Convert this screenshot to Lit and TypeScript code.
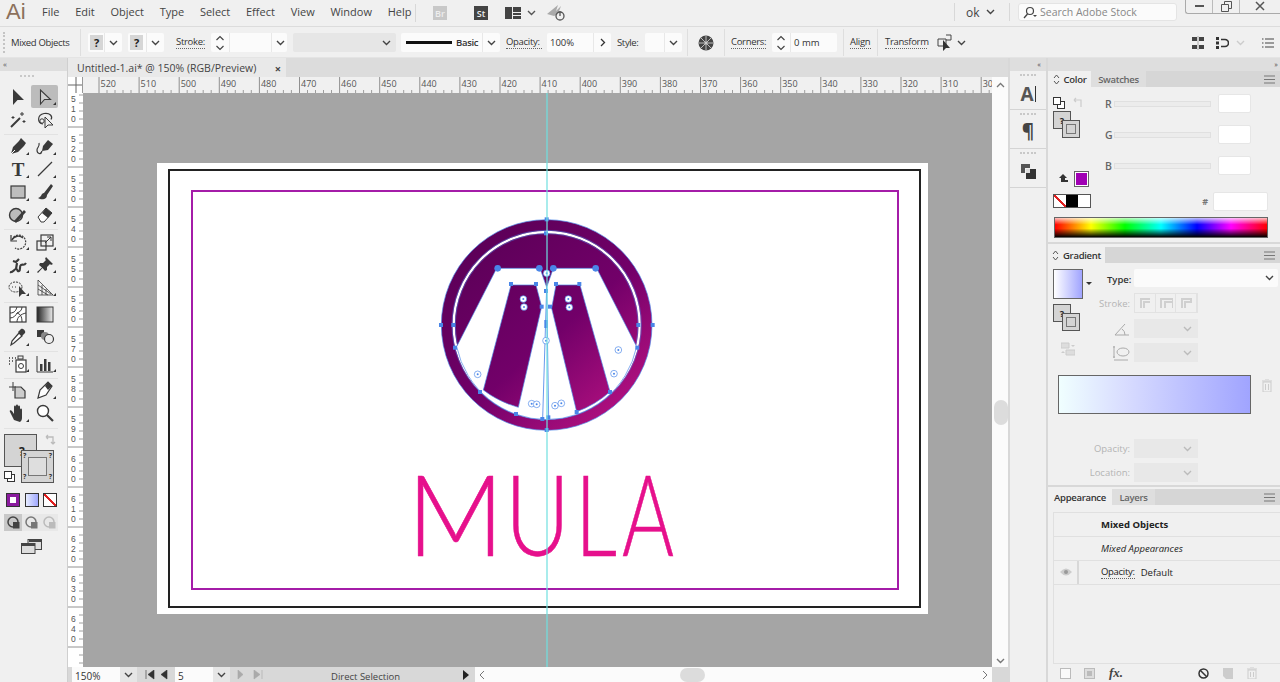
import { LitElement, html, css, svg } from 'lit';
import { customElement } from 'lit/decorators.js';

const chevron = html`<svg class="chev" width="9" height="6" viewBox="0 0 9 6"><path d="M1 1l3.5 3.5L8 1" fill="none" stroke="currentColor" stroke-width="1.4"/></svg>`;
const spinner = html`<svg width="10" height="16" viewBox="0 0 10 16"><path d="M1.5 5L5 1.5 8.5 5M1.5 11L5 14.5 8.5 11" fill="none" stroke="#444" stroke-width="1.2"/></svg>`;
const burger = html`<svg width="11" height="9" viewBox="0 0 11 9"><path d="M0 1h11M0 4.5h11M0 8h11" stroke="#777" stroke-width="1.2"/></svg>`;
const updown = html`<svg width="7" height="11" viewBox="0 0 7 11"><path d="M1 4l2.5-3L6 4M1 7l2.5 3L6 7" fill="none" stroke="#555"/></svg>`;

const ink = '#3a3a3a';
// tool icons, 20x20, in the order of the palette; null marks a separator
const tools: any[] = [
  svg`<path d="M5 2v16l4.5-5H16z" fill="${ink}"/>`,
  svg`<path d="M5.5 3v14l4-4.5h6z" fill="#cfcfcf" stroke="${ink}" stroke-width="1.1"/>`,
  svg`<path d="M3 17l9-9" stroke="${ink}" stroke-width="2"/><path d="M14 2v4M12 4h4M5 6v3M3.500 7.500h3M16 10v3M14.500 11.500h3" stroke="${ink}"/>`,
  svg`<path d="M8 14C2 13 2 5 9 3.500c6-1 9 3 7 6" fill="none" stroke="${ink}" stroke-width="1.2"/><circle cx="7" cy="11" r="2.200" fill="none" stroke="${ink}"/><path d="M10 7v11l3-3h5z" fill="#eee" stroke="${ink}"/>`,
  null,
  svg`<path d="M3 18l2-7 6-6 5 5-6 6zM11 5l2-3 5 5-2 3" fill="${ink}"/><path d="M3 18l4-4" stroke="#fff"/>`,
  svg`<path d="M7 15l1-5 5-6 5 4-5 6z" fill="${ink}"/><path d="M7 15C6 19 2 18 2 14c0-3 3-3 2-7" fill="none" stroke="${ink}" stroke-width="1.2"/>`,
  svg`<text x="10" y="17" text-anchor="middle" class="glyph">T</text>`,
  svg`<path d="M3 17L17 3" stroke="${ink}" stroke-width="1.3"/>`,
  svg`<rect x="3" y="4" width="14" height="12" fill="#bdbdbd" stroke="${ink}" stroke-width="1.2"/>`,
  svg`<path d="M9 11l7-9 2 2-6 9zM9 11c-3 0-2 4-6 5 3 2 9 2 9-3z" fill="${ink}"/>`,
  svg`<circle cx="8" cy="10" r="6.500" fill="#bbb" stroke="${ink}" stroke-width="1.4"/><path d="M8 18l10-11-2-2L6 16z" fill="${ink}"/>`,
  svg`<path d="M3 12l8-9 6 5-8 9H6z" fill="#fff" stroke="${ink}"/><path d="M11 3l6 5-4 5-6-5z" fill="${ink}"/>`,
  null,
  svg`<path d="M4 8a7 7 0 1 1 3 8" fill="none" stroke="${ink}" stroke-dasharray="2 1" stroke-width="1.2"/><path d="M4 8a7 7 0 0 1 11-2" fill="none" stroke="${ink}" stroke-width="1.3"/><path d="M3 3v6h6" fill="none" stroke="${ink}" stroke-width="1.2"/>`,
  svg`<rect x="2" y="9" width="9" height="9" fill="none" stroke="${ink}" stroke-width="1.2"/><rect x="6" y="3" width="12" height="11" fill="none" stroke="${ink}" stroke-width="1.2"/><path d="M10 11l6-6M12 5h4v4" fill="none" stroke="${ink}"/>`,
  svg`<path d="M2 17c3 1 4-3 6-3s1 3 3 2 0-5 2-6 3 1 5-2M5 6l3 1 3-3M9 8l-1 6" fill="none" stroke="${ink}" stroke-width="2.200"/>`,
  svg`<path d="M11 2l7 7-2 1-1-1-3 3 0 3-2 1-2.500-3L3 18l-1-1 5-4.500L4 10l1-2 3 0 3-3-1-1z" fill="${ink}"/>`,
  svg`<ellipse cx="7.500" cy="9" rx="6.500" ry="5" fill="none" stroke="${ink}" stroke-dasharray="2 1"/><path d="M4 9h1M7 9h1" stroke="${ink}"/><path d="M11 8v11l3-3h4z" fill="${ink}"/>`,
  svg`<path d="M3 2v15h15M3 2l15 15M3 7l13 9M3 11l10 6M7 7v10M11 11v6" fill="none" stroke="${ink}" stroke-width=".8"/>`,
  null,
  svg`<rect x="2" y="3" width="16" height="15" fill="#fff" stroke="${ink}" stroke-width="1.2"/><path d="M2 9c5 0 6-3 7-6M9 18c0-5 4-8 9-9M2 14c4 0 6-3 7-5 3 1 5 3 5 9M14 3c0 3-2 5-5 6" fill="none" stroke="${ink}"/>`,
  svg`<defs><linearGradient id="tg"><stop offset="0" stop-color="#222"/><stop offset="1" stop-color="#eee"/></linearGradient></defs><rect x="2" y="3" width="16" height="15" fill="url(#tg)" stroke="${ink}"/>`,
  svg`<path d="M3 18l1-4 7-8 3 3-8 7z" fill="#fff" stroke="${ink}" stroke-width="1.2"/><path d="M10 5l3-3c2-1 5 2 4 4l-3 3z" fill="${ink}"/>`,
  svg`<rect x="2" y="3" width="7" height="7" fill="${ink}"/><circle cx="10" cy="9" r="4" fill="#888"/><circle cx="14" cy="12" r="4.500" fill="#eee" stroke="${ink}" stroke-width="1.2"/>`,
  null,
  svg`<path d="M1 4h1M4 4h1M7 4h1M1 7h1M4 7h1M1 10h1" stroke="${ink}" stroke-width="1.4"/><rect x="10" y="2" width="5" height="3" fill="none" stroke="${ink}"/><rect x="8" y="6" width="10" height="12" fill="#fff" stroke="${ink}" stroke-width="1.2"/><circle cx="13" cy="12" r="2.500" fill="none" stroke="${ink}"/>`,
  svg`<path d="M2 2v16h16" fill="none" stroke="${ink}"/><path d="M5 10h2.500v7H5zM9 5h2.500v12H9zM13 8h2.500v9H13z" fill="${ink}"/>`,
  null,
  svg`<path d="M1 7h7M5 2v9" stroke="${ink}"/><path d="M7 7h6l4 4v7H7z" fill="#ccc" stroke="${ink}" stroke-width="1.2"/>`,
  svg`<path d="M3 18l2-8 8-8 4 4-6 9z" fill="#fff" stroke="${ink}" stroke-width="1.2"/><path d="M10 6l3-4 4 4-4 4z" fill="${ink}"/>`,
  svg`<path d="M6 17L2 9c-1-2 1-2 2-1l2 3V4c0-2 2-2 2 0v4-5c0-2 2-2 2 0v5-4c0-2 2-2 2 0v6-3c0-2 2-2 2 0v8c0 2-1 3-2 4z" fill="${ink}"/>`,
  svg`<circle cx="8" cy="8" r="5.500" fill="#fff" stroke="${ink}" stroke-width="1.4"/><path d="M12 12l6 6" stroke="${ink}" stroke-width="2.200"/>`,
];
// tools without the small flyout corner
const noCorner = new Set([0, 2, 3, 18, 19, 21, 24, 27]);

const nodes = [[203,175],[328,175],[370,175],[497,175],[243,222],[318,222],[378,222],[448,222],[335,290],[360,290],[348,243],[33,345],[70,345],[625,345],[668,345],[75,413],[622,413],[150,546],[540,546],[258,612],[440,606],[337,627],[355,622],[350,28],[348,70],[350,660]];
const corners = [[280,267],[282,291],[415,267],[418,292],[350,190],[348,392],[565,420],[552,491],[143,493],[305,581],[320,583],[375,587],[394,580]];

@customElement('app-root')
export class AppRoot extends LitElement {
  static styles = css`
    :host {
      display: block;
      width: 1280px;
      height: 682px;
      overflow: hidden;
      background: #f0f0f0;
      color: #333;
      font-family: "Open Sans", "Noto Sans", sans-serif;
      font-size: 10px;
    }
    .app { display: flex; flex-direction: column; height: 682px; }
    svg { display: block; flex: none; }

    .ml4 { margin-left: 4px; } .ml5 { margin-left: 5px; } .ml6 { margin-left: 6px; }
    .ml7 { margin-left: 7px; } .ml10 { margin-left: 10px; } .ml12 { margin-left: 12px; }
    .ml17 { margin-left: 17px; }

    /* menu bar */
    .menubar { height: 26px; display: flex; align-items: center; border-bottom: 1px solid #dcdcdc; flex: none; position: relative; }
    .ailogo { width: 42px; padding-left: 6px; box-sizing: border-box; font: 400 22px/24px "Liberation Sans", sans-serif; color: #8c705c; align-self: flex-start; }
    .menus { display: flex; gap: 15.750px; width: 373px; font-size: 11px; color: #444; margin-top: -3px; }
    .vsep { width: 1px; height: 18px; background: #d8d8d8; flex: none; }
    .br, .st { width: 14px; height: 14px; display: flex; align-items: center; justify-content: center; font-size: 9px; font-weight: 600; margin-left: 17px; }
    .br { background: #c8c8c8; color: #eee; }
    .st { background: #444; color: #eee; margin-left: 27px; }
    .layout-chev { margin-left: 6px; color: #555; }
    .menu-right { margin-left: auto; display: flex; align-items: center; height: 26px; margin-top: -2px; }
    .ok { font-size: 12px; color: #444; margin-left: 11px; width: 43px; display: flex; gap: 6px; align-items: center; }
    .search { width: 159px; height: 18px; margin-left: 8px; background: #fbfbfb; border: 1px solid #e4e4e4; border-radius: 3px; box-sizing: border-box; display: flex; align-items: center; gap: 3px; padding-left: 4px; color: #888; font-size: 10.500px; }
    .winbtns { display: flex; align-self: flex-start; margin: 0 0 0 8px; width: 95px; height: 15px; border: 1px solid #aaa; border-top: none; border-right: none; box-sizing: border-box; border-radius: 0 0 0 3px; }
    .winbtns div { display: flex; align-items: center; justify-content: center; border-right: 1px solid #bbb; }
    .winbtns div:nth-child(1) { width: 26px; }
    .winbtns div:nth-child(2) { width: 26px; }
    .winbtns div:nth-child(3) { flex: 1; border: none; }

    /* control bar */
    .options { height: 31px; flex: none; display: flex; align-items: center; border-bottom: 1px solid #e4e4e4; box-sizing: border-box; padding-top: 1px; }
    .grip { width: 0; height: 21px; margin-left: 3px; border-left: 2px dotted #c4c4c4; flex: none; }
    .dot { border-bottom: 1px dotted #666; line-height: 12px; font-size: 9.500px; letter-spacing: -0.300px; white-space: nowrap; flex: none; display: block; }
    .lbl { font-size: 9.500px; letter-spacing: -0.350px; white-space: nowrap; flex: none; display: block; }
    .w-mixed { width: 69px; margin-left: 6px; }
    .w-stroke { width: 29px; } .w-opacity { width: 36px; } .w-style { width: 24px; } .w-corners { width: 35px; } .w-align { width: 21px; } .w-transform { width: 42px; }
    .box { height: 19px; background: #fbfbfb; display: flex; align-items: center; box-sizing: border-box; font-size: 9.500px; border-radius: 2px; flex: none; }
    .box .chev { color: #444; }
    .cell { display: flex; align-items: center; justify-content: center; height: 100%; border-left: 1px solid #e8e8e8; flex: none; width: 17px; }
    .cell.end { margin-left: auto; }
    .cell.spin { width: 18px; border-left: none; }
    .cell.field { width: 41px; }
    .cell.style { width: 19px; border-left: none; }
    .cell.mm { width: auto; padding-left: 3px; }
    .q { width: 13px; height: 15px; margin-left: 2px; background: #d6d6d6; display: flex; align-items: center; justify-content: center; font-weight: 700; font-size: 11px; color: #222; }
    .optsep { width: 1px; height: 27px; background: #dedede; flex: none; }
    .line { width: 46px; height: 3px; background: #111; margin-left: 5px; margin-right: 4px; }
    .basic { font-weight: 600; letter-spacing: -0.300px; }
    .w34 { width: 34px; } .w36 { width: 36px; } .w76 { width: 76px; } .w99 { width: 99px; } .w37 { width: 37px; } .w65 { width: 65px; }
    .w64 { width: 64px; padding-left: 3px; }
    .disabled-box { background: #e6e6e6; color: #bbb; width: 103px; justify-content: flex-end; padding-right: 5px; }
    .opt-right { margin-left: auto; display: flex; align-items: center; padding-right: 6px; }
    .dim { color: #ccc; margin-left: 7px; }
    .transform-chev { margin-left: 4px; color: #444; }

    /* workspace */
    .work { flex: 1; display: flex; min-height: 0; }
    .strip { height: 13px; background: #dedede; flex: none; color: #555; font-size: 8px; line-height: 11px; letter-spacing: -1px; }

    /* tool palette */
    .toolbar { width: 68px; flex: none; border-right: 1px solid #cfcfcf; box-sizing: border-box; display: flex; flex-direction: column; }
    .toolbar .strip { padding-left: 3px; }
    .tgrip { height: 14px; display: flex; justify-content: center; width: 54px; flex: none; }
    .tgrip i { width: 14px; height: 3px; margin-top: 4px; border-top: 2px dotted #c8c8c8; }
    .tools { display: grid; grid-template-columns: 27px 27px; margin-left: 4px; width: 54px; border-bottom: 1px solid #e2e2e2; padding-bottom: 3px; }
    .tool { height: 23px; display: flex; align-items: center; justify-content: center; position: relative; }
    .tool.on { background: #bcbcbc; border-radius: 2px; }
    .tool.corner::after { content: ""; position: absolute; right: 2px; bottom: 3px; border-left: 3px solid transparent; border-bottom: 3px solid #333; }
    .glyph { font: 700 19px "Liberation Serif", serif; fill: #3a3a3a; }
    .tsep { grid-column: span 2; height: 3.500px; box-sizing: border-box; border-bottom: 1px solid #e2e2e2; }

    .fillstroke { position: relative; height: 50px; margin: 5px 0 0 4px; width: 54px; flex: none; }
    .fs-fill { position: absolute; left: 0; top: 0; width: 33px; height: 33px; background: #d4d4d4; border: 1px solid #555; box-sizing: border-box; }
    .fs-q { position: absolute; left: 15px; top: 9px; font-size: 12px; font-weight: 700; color: #222; }
    .fs-stroke { position: absolute; left: 17px; top: 16px; width: 33px; height: 33px; background: #d4d4d4; border: 1px solid #555; box-sizing: border-box; display: flex; align-items: center; justify-content: center; }
    .fs-stroke i { width: 19px; height: 19px; border: 1px solid #777; box-sizing: border-box; background: #dedede; }
    .fs-stroke b { position: absolute; font-size: 7px; line-height: 8px; color: #333; }
    .c1 { left: 1px; top: 1px; } .c2 { right: 1px; top: 1px; } .c3 { left: 1px; bottom: 1px; } .c4 { right: 1px; bottom: 1px; }
    .fs-swap { position: absolute; left: 41px; top: 0; }
    .fs-def { position: absolute; left: 0; top: 37px; }
    .modes { display: flex; gap: 4.500px; margin: 9px 0 0 6px; flex: none; }
    .modes div { width: 12px; height: 12px; border: 1px solid #333; box-sizing: content-box; }
    .m1 { background: #fff; box-shadow: inset 0 0 0 3px #8a1a9e; }
    .m2 { background: linear-gradient(90deg, #e6ecff, #a0a8ff); }
    .m3 { background: linear-gradient(to top right, #fff 42%, #e02020 42%, #e02020 58%, #fff 58%); }
    .draw { display: flex; margin: 7px 0 0 4px; width: 54px; height: 17px; background: #e8e8e8; flex: none; }
    .draw div { width: 18px; display: flex; align-items: center; justify-content: center; }
    .draw div:first-child { background: #c8c8c8; }
    .screen { margin: 8px 0 0 21px; }

    /* document */
    .doc { flex: 1; display: flex; flex-direction: column; min-width: 0; }
    .tabs { height: 19px; flex: none; background: #dcdcdc; display: flex; }
    .tab { width: 218px; background: #e9e9e9; display: flex; align-items: center; justify-content: space-between; padding: 1px 5px 0 9px; box-sizing: border-box; font-size: 10.500px; font-weight: 500; color: #444; }
    .close { font-weight: 700; font-size: 11px; }
    .hrow { height: 16px; flex: none; display: flex; }
    .corner-box { width: 15px; background: #fff; flex: none; border-right: 1px solid #999; box-sizing: border-box; }
    .rtext { font: 9px "Open Sans", sans-serif; fill: #555; }
    .vtext { font: 8.500px "Liberation Sans", sans-serif; fill: #555; }
    .ruler-bg { background: #fff; }
    .scroll-up { width: 16px; flex: none; background: #fbfbfb; display: flex; justify-content: center; align-items: center; color: #777; }
    .mid { flex: 1; display: flex; min-height: 0; }
    .paste { width: 909px; height: 574px; background: #a5a5a5; flex: none; }
    .mula { font: 300 113px "Lato", sans-serif; fill: #e6108c; stroke: #e6108c; stroke-width: 0.600px; }
    .vscroll { width: 16px; flex: none; background: #fbfbfb; position: relative; display: flex; align-items: flex-end; justify-content: center; color: #777; padding-bottom: 3px; box-sizing: border-box; }
    .vthumb { position: absolute; left: 2px; top: 307px; width: 14px; height: 25px; border-radius: 7px; background: #dcdcdc; }
    .status { height: 15px; flex: none; display: flex; background: #d8d8d8; font-size: 10px; overflow: hidden; }
    .st-in { background: #fbfbfb; display: flex; align-items: center; box-sizing: border-box; padding: 3px 0 0 3px; height: 15px; flex: none; margin-left: 4px; }
    .st-zoom { width: 48px; } .st-page { width: 38px; }
    .st-cv { background: #e6e6e6; display: flex; align-items: center; justify-content: center; height: 15px; flex: none; color: #444; width: 17px; }
    .nav-a { margin: 3px 0 0 8px; } .nav-b { margin: 3px 0 0 7px; }
    .st-name { width: 65px; margin-left: 68px; white-space: nowrap; font-size: 9.500px; line-height: 19px; color: #444; flex: none; }
    .st-play { margin: 3px 0 0 67px; }
    .st-gap { width: 6px; flex: none; }
    .hscroll { width: 517px; background: #fbfbfb; position: relative; flex: none; display: flex; align-items: center; justify-content: space-between; padding: 0 4px; box-sizing: border-box; }
    .hthumb { position: absolute; left: 205px; top: 1px; width: 25px; height: 14px; border-radius: 7px; background: #dcdcdc; }

    /* dock */
    .dock { width: 40px; flex: none; display: flex; flex-direction: column; border-left: 2px solid #d8d8d8; border-right: 2px solid #d8d8d8; box-sizing: border-box; }
    .dock .strip { text-align: right; padding-right: 6px; }
    .ditem { height: 38px; border-bottom: 1px solid #d4d4d4; display: flex; flex-direction: column; align-items: center; flex: none; }
    .ditem i { width: 16px; height: 2px; margin-top: 3px; border-top: 2px dotted #c8c8c8; }
    .ditem div { flex: 1; display: flex; align-items: center; justify-content: center; color: #444; font-size: 17px; font-weight: 700; }
    .ditem .dock-a { font-size: 19px; color: #555; }
    .ditem .para { font-size: 19px; padding-bottom: 4px; }
    .caret { margin-left: 1px; }

    /* panels */
    .panels { width: 232px; flex: none; display: flex; flex-direction: column; }
    .panels > .strip { text-align: right; padding-right: 3px; }
    .phead { height: 16px; background: #d6d6d6; display: flex; flex: none; font-size: 9.500px; font-weight: 600; color: #666; letter-spacing: -0.300px; }
    .phead .burger { margin: 4px 0 0 auto; padding-right: 5px; }
    .ptab { display: flex; align-items: center; justify-content: center; gap: 4px; background: #dedede; box-sizing: border-box; }
    .ptab.on { background: #f0f0f0; color: #333; }
    .t43 { width: 43px; } .t55 { width: 55px; } .t57 { width: 57px; } .t64 { width: 64px; }
    .panel { flex: none; position: relative; box-sizing: border-box; border-bottom: 2px solid #d8d8d8; }
    .color { height: 173px; display: flex; flex-direction: column; }
    .grad { height: 240px; display: flex; flex-direction: column; margin-top: 3px; }
    .appear { flex: 1; margin-top: 2px; display: flex; flex-direction: column; border: none; }

    .cbody { flex: 1; display: grid; grid-template-columns: 52px 1fr; padding: 7px 0 0 5px; position: relative; }
    .cleft { display: flex; flex-direction: column; }
    .toprow { display: flex; gap: 8px; height: 17px; align-items: center; }
    .mini { position: relative; width: 28px; height: 27px; }
    .mini .a { position: absolute; left: 0; top: 0; width: 18px; height: 18px; background: #d4d4d4; border: 1px solid #555; box-sizing: border-box; font-size: 9px; font-weight: 700; text-align: center; line-height: 17px; color: #222; }
    .mini .b { position: absolute; left: 9px; top: 9px; width: 18px; height: 18px; background: #d4d4d4; border: 1px solid #555; box-sizing: border-box; display: flex; align-items: center; justify-content: center; }
    .mini .b i { width: 10px; height: 10px; border: 1px solid #777; box-sizing: border-box; }
    .sliders { display: flex; flex-direction: column; gap: 12px; }
    .srow { display: grid; grid-template-columns: 9px 97px 40px; height: 19px; align-items: center; font-size: 10.500px; color: #666; font-weight: 600; }
    .track { height: 4px; background: #ececec; border: 1px solid #e0e0e0; }
    .inp { height: 19px; background: #fff; border: 1px solid #e6e6e6; border-radius: 2px; box-sizing: border-box; }
    .srow .inp { margin-left: 7px; }
    .oog { display: flex; gap: 6px; align-items: center; position: absolute; left: 10px; top: 84px; }
    .oog i { width: 13px; height: 14px; background: #a000b4; border: 1px solid #666; box-shadow: inset 0 0 0 1px #fff; }
    .ramp { position: absolute; left: 5px; top: 107px; display: flex; width: 36px; height: 12px; border: 1px solid #555; }
    .ramp i { flex: 1; }
    .ramp i:nth-child(1) { background: linear-gradient(to top right, #fff 42%, #e02020 42%, #e02020 58%, #fff 58%); }
    .ramp i:nth-child(2) { background: #000; }
    .ramp i:nth-child(3) { background: #fff; }
    .hex { position: absolute; right: 12px; top: 105px; display: flex; align-items: center; gap: 5px; color: #777; font-weight: 700; font-size: 9px; }
    .hex .inp { width: 55px; }
    .spectrum { position: absolute; left: 6px; top: 130px; width: 214px; height: 21px; box-sizing: border-box; border: 1px solid #666;
      background: linear-gradient(to bottom, rgba(255,255,255,.75), rgba(255,255,255,0) 35%, rgba(0,0,0,0) 55%, #000), linear-gradient(90deg, #f00, #ff0 17%, #0f0 33%, #0ff 50%, #00f 67%, #f0f 83%, #f00); }

    .gbody { flex: 1; padding: 6px 0 0 5px; display: flex; flex-direction: column; }
    .thumb-g { width: 30px; height: 30px; border: 1px solid #666; box-sizing: border-box; background: linear-gradient(90deg, #fff, #a0a4ff); flex: none; }
    .gmini { margin-top: 5px; }
    .gicon { margin: 11px 0 0 8px; }
    .garrow { position: absolute; left: 38px; top: 35px; }
    .gform { position: absolute; left: 52px; top: 46px; display: grid; grid-template-columns: 30px 64px; column-gap: 4px; row-gap: 5px; align-items: center; justify-items: end; }
    .gray { color: #b4b4b4; font-size: 9.500px; }
    .sel { width: 64px; height: 19px; background: #e8e8e8; display: flex; align-items: center; justify-content: flex-end; padding-right: 6px; box-sizing: border-box; color: #bbb; }
    .caps { width: 64px; height: 20px; margin-bottom: 1px; display: flex; border: 1px solid #e2e2e2; box-sizing: border-box; }
    .caps div { flex: 1; border-right: 1px solid #e2e2e2; display: flex; align-items: center; justify-content: center; }
    .typesel { position: absolute; left: 86px; top: 22px; width: 144px; height: 18px; background: #fbfbfb; border-radius: 2px; display: flex; align-items: center; justify-content: flex-end; padding-right: 4px; box-sizing: border-box; color: #444; }
    .typelbl { position: absolute; left: 59px; top: 26px; font-size: 9.500px; font-weight: 600; }
    .gbar { position: absolute; left: 10px; top: 128px; width: 193px; height: 39px; border: 1px solid #666; box-sizing: border-box; background: linear-gradient(90deg, #f0ffff, #d8dcff 35%, #a0a4ff); }
    .gtrash { position: absolute; left: 214px; top: 132px; }
    .oform { position: absolute; left: 40px; top: 192px; display: grid; grid-template-columns: 42px 64px; column-gap: 4px; row-gap: 5px; align-items: center; justify-items: end; }

    .alist { margin: 7px 0 0 5px; flex: 1; border: 1px solid #e0e0e0; border-right: none; box-sizing: border-box; }
    .arow { height: 23px; border-bottom: 1px solid #e0e0e0; display: flex; align-items: center; padding-left: 47px; font-size: 9.500px; position: relative; color: #222; }
    .arow.title { font-weight: 700; }
    .arow.sub { font-style: italic; font-weight: 500; }
    .def { margin-left: 6px; font-weight: 500; }
    .eye { position: absolute; left: 6px; top: 7px; }
    .eyeline { position: absolute; left: 23px; top: 0; width: 2px; height: 23px; background: #d8d8d8; }
    .afoot { height: 18px; flex: none; position: relative; display: flex; align-items: center; }
    .afoot > * { position: absolute; }
    .fx { font: italic 600 13px "Liberation Serif", serif; color: #444; left: 61px; }
    .f1 { left: 12px; } .f2 { left: 36px; } .f4 { left: 150px; } .f5 { left: 175px; } .f6 { left: 199px; }
  `;

  private hruler() {
    const items = [];
    for (let i = 0; i < 23; i++) {
      const x = 99 + i * 40.100;
      const label = 520 - i * 10;
      items.push(svg`<path d="M${x} 0v16" stroke="#777" stroke-width=".8"/>`);
      items.push(svg`<text x="${x + 1.500}" y="10" class="rtext">${i === 22 ? '30' : label}</text>`);
      for (let k = 1; k < 5; k++) items.push(svg`<path d="M${x + k * 8} 13v3" stroke="#888" stroke-width=".8"/>`);
    }
    return html`<svg width="909" height="16" viewBox="83 0 909 16">${items}</svg>`;
  }

  private vruler() {
    const items = [];
    for (let i = 0; i < 15; i++) {
      const y = 87 + i * 40;
      items.push(svg`<path d="M68 ${y}h15" stroke="#777" stroke-width=".8"/>`);
      if (i < 14) {
        // digits stacked in one text
        const spans = String(510 + i * 10).split('').map((d, n) => svg`<tspan x="71" y="${y + 15 + n * 9.800}">${d}</tspan>`);
        items.push(svg`<text class="vtext">${spans}</text>`);
      }
      for (let k = 1; k < 5; k++) items.push(svg`<path d="M79 ${y + k * 8}h4" stroke="#888" stroke-width=".8"/>`);
    }
    return html`<svg class="ruler-bg" width="15" height="574" viewBox="68 93 15 574">${items}</svg>`;
  }

  private canvas() {
    const whiteShape = 'M80 410 L200 175 H330 L350 232 L370 175 H500 L620 410 A276 276 0 0 1 80 410Z';
    const left = 'M243 225 H318 L335 290 L265 592 Q205 575 160 540Z';
    const right = 'M378 225 H450 L540 545 Q495 585 440 605 L365 295Z';
    const blue = '#4a86e8';
    return html`<svg class="paste" width="909" height="574" viewBox="83 93 909 574">
      <defs>
        <linearGradient id="lg" gradientUnits="userSpaceOnUse" x1="130" y1="100" x2="570" y2="600">
          <stop offset="0" stop-color="#5c0058"/><stop offset=".55" stop-color="#720069"/><stop offset="1" stop-color="#b0107f"/>
        </linearGradient>
      </defs>
      <rect x="157" y="163" width="771" height="451" fill="#fff"/>
      <rect x="169" y="170" width="751" height="437" fill="none" stroke="#222" stroke-width="2"/>
      <rect x="192" y="191" width="706" height="398" fill="none" stroke="#a41ca8" stroke-width="2"/>
      <g transform="translate(430 210) scale(.33333)">
        <circle cx="350" cy="345" r="316" fill="url(#lg)" stroke="${blue}" stroke-width="2"/>
        <circle cx="350" cy="345" r="279" fill="none" stroke="#fff" stroke-width="7"/>
        <circle cx="350" cy="345" r="284" fill="none" stroke="${blue}" stroke-width="1.500"/>
        <circle cx="350" cy="345" r="274" fill="none" stroke="${blue}" stroke-width="1.500"/>
        <path d="${whiteShape}" fill="#fff" stroke="${blue}" stroke-width="2"/>
        <path d="${left}" fill="url(#lg)" stroke="${blue}" stroke-width="2"/>
        <path d="${right}" fill="url(#lg)" stroke="${blue}" stroke-width="2"/>
        <path d="M338 625 L350 232 L356 622" fill="none" stroke="${blue}" stroke-width="2.500"/>
        <rect x="343" y="330" width="10" height="24" fill="${blue}"/>
        ${nodes.map(([x, y]) => svg`<rect x="${x - 6}" y="${y - 6}" width="12" height="12" fill="${blue}"/>`)}
        ${[[203,175],[328,175],[370,175],[497,175]].map(([x, y]) => svg`<circle cx="${x}" cy="${y}" r="10" fill="${blue}"/>`)}
        ${corners.map(([x, y]) => svg`<circle cx="${x}" cy="${y}" r="10" fill="#fff" stroke="${blue}" stroke-width="2"/><circle cx="${x}" cy="${y}" r="3" fill="${blue}"/>`)}
      </g>
      <text y="556" class="mula"><tspan x="407" textLength="97" lengthAdjust="spacingAndGlyphs">M</tspan><tspan x="505" textLength="65" lengthAdjust="spacingAndGlyphs">U</tspan><tspan x="575" textLength="42" lengthAdjust="spacingAndGlyphs">L</tspan><tspan x="622" textLength="52" lengthAdjust="spacingAndGlyphs">A</tspan></text>
      <path d="M547 93V667" stroke="#6fe0e0" stroke-width="1.200"/>
    </svg>`;
  }

  private mini() {
    return html`<div class="mini"><div class="a">?</div><div class="b"><i></i></div></div>`;
  }

  render () {
    return html`
      <div class="app">
        <div class="menubar">
          <div class="ailogo">Ai</div>
          <div class="menus">${['File', 'Edit', 'Object', 'Type', 'Select', 'Effect', 'View', 'Window', 'Help'].map(m => html`<span>${m}</span>`)}</div>
          <div class="vsep"></div>
          <div class="br">Br</div>
          <div class="st">St</div>
          <svg class="ml17" width="16" height="12" viewBox="0 0 16 12"><path d="M0 0h7v12H0zM8 0h8v5H8zM8 6h8v2H8zM8 9h8v3H8z" fill="#444"/></svg>
          <span class="layout-chev">${chevron}</span>
          <svg class="ml10" width="21" height="18" viewBox="0 0 21 18"><path d="M1 10L12 1l-2 6 5-5-3 8-4 2z" fill="#aaa"/><circle cx="14" cy="12" r="4" fill="none" stroke="#555" stroke-width="1.300"/><path d="M14 7v5" stroke="#555" stroke-width="1.300"/></svg>
          <div class="menu-right">
            <div class="vsep"></div>
            <div class="ok">ok ${chevron}</div>
            <div class="vsep"></div>
            <div class="search">
              <svg width="14" height="13" viewBox="0 0 14 13"><circle cx="7" cy="5" r="3.500" fill="none" stroke="#444" stroke-width="1.200"/><path d="M4.500 8L1 12" stroke="#444" stroke-width="1.400"/><path d="M10 9h4l-2 2z" fill="#444"/></svg>
              Search Adobe Stock
            </div>
            <div class="winbtns">
              <div><svg width="9" height="3"><rect width="9" height="2" fill="#555"/></svg></div>
              <div><svg width="11" height="11" viewBox="0 0 11 11"><path d="M3.500 3V.500h7v7H8M.5 3.500h7v7h-7z" fill="none" stroke="#555"/></svg></div>
              <div><svg width="10" height="10" viewBox="0 0 10 10"><path d="M1 1l8 8M9 1l-8 8" stroke="#555" stroke-width="1.500"/></svg></div>
            </div>
          </div>
        </div>

        <div class="options">
          <div class="grip"></div>
          <span class="lbl w-mixed">Mixed Objects</span>
          <div class="optsep"></div>
          <div class="box w34 ml7"><div class="q">?</div><div class="cell end">${chevron}</div></div>
          <div class="box w36 ml6"><div class="q">?</div><div class="cell end">${chevron}</div></div>
          <span class="dot w-stroke ml12">Stroke:</span>
          <div class="box w76 ml6"><div class="cell spin">${spinner}</div><div class="cell field"></div><div class="cell">${chevron}</div></div>
          <div class="box disabled-box ml6">${chevron}</div>
          <div class="box w99 ml5"><div class="line"></div><span class="basic">Basic</span><div class="cell end">${chevron}</div></div>
          <span class="dot w-opacity ml6">Opacity:</span>
          <div class="box w64 ml5">100%<div class="cell end"><svg width="6" height="9" viewBox="0 0 6 9"><path d="M1 1l3.500 3.500L1 8" fill="none" stroke="#333" stroke-width="1.300"/></svg></div></div>
          <span class="lbl w-style ml6">Style:</span>
          <div class="box w37 ml4"><div class="cell style"></div><div class="cell">${chevron}</div></div>
          <div class="optsep ml5"></div>
          <svg class="ml10" width="16" height="16" viewBox="0 0 16 16"><circle cx="8" cy="8" r="7.500" fill="#444"/><path d="M8 1v14M1 8h14M3 3l10 10M13 3L3 13" stroke="#bbb"/><circle cx="8" cy="8" r="1.500" fill="#ccc"/></svg>
          <div class="optsep ml10"></div>
          <span class="dot w-corners ml6">Corners:</span>
          <div class="box w65 ml6"><div class="cell spin">${spinner}</div><div class="cell mm">0 mm</div></div>
          <div class="optsep ml6"></div>
          <span class="dot w-align ml6">Align</span>
          <div class="optsep ml6"></div>
          <span class="dot w-transform ml7">Transform</span>
          <svg class="ml10" width="16" height="17" viewBox="0 0 16 17"><path d="M1 5h8v7H1zM9 1h5v5H9" fill="none" stroke="#444"/><path d="M6 6v11l3-3h4z" fill="#333"/></svg>
          <span class="transform-chev">${chevron}</span>
          <div class="opt-right">
            <svg width="12" height="14" viewBox="0 0 12 14"><path d="M0 1h5v4H0zM7 1h5v4H7zM0 9h5v4H0zM7 9h5v4H7z" fill="#444"/><path d="M6 0v14" stroke="#aaa"/></svg>
            <svg class="ml12" width="13" height="12" viewBox="0 0 13 12"><path d="M0 0h3v3H0zM0 9h3v3H0zM0 4.500h3v3H0z" fill="#333"/><path d="M5 2.500h4a3 3 0 0 1 0 7H5" fill="none" stroke="#333" stroke-width="1.600"/></svg>
            <span class="dim">${chevron}</span>
            <svg class="ml17" width="12" height="10" viewBox="0 0 12 10"><path d="M3 1h9M3 5h9M3 9h9M0 1h1.500M0 5h1.500M0 9h1.500" stroke="#444" stroke-width="1.200"/></svg>
          </div>
        </div>

        <div class="work">
          <div class="toolbar">
            <div class="strip">‹‹</div>
            <div class="tgrip"><i></i></div>
            <div class="tools">
              ${(() => {
                let n = -1;
                return tools.map(t => {
                  if (t === null) return html`<div class="tsep"></div>`;
                  n++;
                  return html`<div class="tool ${n === 1 ? 'on' : ''} ${noCorner.has(n) ? '' : 'corner'}"><svg width="20" height="20" viewBox="0 0 20 20">${t}</svg></div>`;
                });
              })()}
            </div>
            <div class="fillstroke">
              <div class="fs-fill"></div><span class="fs-q">?</span>
              <div class="fs-stroke"><i></i><b class="c1">?</b><b class="c2">?</b><b class="c3">?</b><b class="c4">?</b></div>
              <svg class="fs-swap" width="12" height="12" viewBox="0 0 12 12"><path d="M1 3h7v7M1 3l2-2M1 3l2 2M8 10l-2-2M8 10l2-2" fill="none" stroke="#bbb" stroke-width="1.300"/></svg>
              <svg class="fs-def" width="11" height="11" viewBox="0 0 11 11"><rect x="3.500" y="3.500" width="7" height="7" fill="#fff" stroke="#333"/><rect x=".5" y=".5" width="7" height="7" fill="#fff" stroke="#333"/></svg>
            </div>
            <div class="modes"><div class="m1"></div><div class="m2"></div><div class="m3"></div></div>
            <div class="draw">
              ${['#444', '#777', '#bbb'].map(c => html`<div><svg width="13" height="13" viewBox="0 0 13 13"><circle cx="6" cy="6" r="5" fill="none" stroke="${c}" stroke-width="1.500"/><rect x="6" y="6" width="6.500" height="6.500" fill="${c}"/></svg></div>`)}
            </div>
            <svg class="screen" width="21" height="15" viewBox="0 0 21 15"><rect x="7" y=".5" width="13.500" height="10" fill="#ddd" stroke="#444"/><rect x=".5" y="4.500" width="13.500" height="10" fill="#ddd" stroke="#444"/><path d="M1 6h13M8 2h12" stroke="#444" stroke-width="2"/></svg>
          </div>

          <div class="doc">
            <div class="tabs"><div class="tab"><span>Untitled-1.ai* @ 150% (RGB/Preview)</span><span class="close">×</span></div></div>
            <div class="hrow">
              <div class="corner-box"><svg width="14" height="16" viewBox="0 0 14 16"><path d="M0 8h14M8 0v16" stroke="#666"/></svg></div>
              ${this.hruler()}
              <div class="scroll-up"><svg width="9" height="6" viewBox="0 0 9 6"><path d="M1 5l3.500-3.500L8 5" fill="none" stroke="currentColor" stroke-width="1.300"/></svg></div>
            </div>
            <div class="mid">
              ${this.vruler()}
              ${this.canvas()}
              <div class="vscroll"><div class="vthumb"></div>${chevron}</div>
            </div>
            <div class="status">
              <div class="st-in st-zoom">150%</div>
              <div class="st-cv">${chevron}</div>
              <svg class="nav-a" width="26" height="10" viewBox="0 0 26 10"><path d="M1 0v9M9 0v9L3 4.500zM22 0v9l-6-4.500z" fill="#333" stroke="#333" stroke-width=".6"/></svg>
              <div class="st-in st-page">5</div>
              <div class="st-cv">${chevron}</div>
              <svg class="nav-b" width="26" height="10" viewBox="0 0 26 10"><path d="M1 0v9l5-4.500zM17 0v9l6-4.500zM25 0v9" fill="#aaa" stroke="#aaa" stroke-width=".6"/></svg>
              <div class="st-name">Direct Selection</div>
              <svg class="st-play" width="6" height="10" viewBox="0 0 6 10"><path d="M0 0l6 5-6 5z" fill="#222"/></svg>
              <div class="st-gap"></div>
              <div class="hscroll">
                <svg width="6" height="10" viewBox="0 0 6 10"><path d="M5 1L1 5l4 4" fill="none" stroke="#777"/></svg>
                <div class="hthumb"></div>
                <svg width="6" height="10" viewBox="0 0 6 10"><path d="M1 1l4 4-4 4" fill="none" stroke="#777"/></svg>
              </div>
            </div>
          </div>

          <div class="dock">
            <div class="strip">‹‹</div>
            <div class="ditem"><i></i><div><span class="dock-a">A</span><svg class="caret" width="1" height="16"><rect width="1" height="16" fill="#333"/></svg></div></div>
            <div class="ditem"><i></i><div class="para">¶</div></div>
            <div class="ditem"><i></i><div><svg width="15" height="15" viewBox="0 0 15 15"><path d="M0 0h9v4H4v5H0z" fill="#555"/><path d="M5 5h10v10H5z" fill="#333"/><path d="M5 5h4v4H5z" fill="#ddd"/></svg></div></div>
          </div>

          <div class="panels">
            <div class="strip">››</div>
            <div class="panel color">
              <div class="phead">
                <div class="ptab on t43">${updown}Color</div><div class="ptab t55">Swatches</div>
                <div class="burger">${burger}</div>
              </div>
              <div class="cbody">
                <div class="cleft">
                  <div class="toprow">
                    <svg width="12" height="12" viewBox="0 0 12 12"><rect x="4.500" y="4.500" width="7" height="7" fill="#fff" stroke="#333"/><rect x=".5" y=".5" width="7" height="7" fill="#fff" stroke="#333"/></svg>
                    <svg width="11" height="11" viewBox="0 0 11 11"><path d="M1 3h7v7M1 3l2-2M1 3l2 2" fill="none" stroke="#ccc" stroke-width="1.200"/></svg>
                  </div>
                  ${this.mini()}
                </div>
                <div class="sliders">
                  ${['R', 'G', 'B'].map(c => html`<div class="srow"><span>${c}</span><div class="track"></div><div class="inp"></div></div>`)}
                </div>
                <div class="oog">
                  <svg width="10" height="11" viewBox="0 0 10 11"><path d="M5 0l4 4H7v2h3v2H3V4H1z" fill="#333"/></svg>
                  <i></i>
                </div>
                <div class="ramp"><i></i><i></i><i></i></div>
                <div class="hex"># <div class="inp"></div></div>
                <div class="spectrum"></div>
              </div>
            </div>

            <div class="panel grad">
              <div class="phead">
                <div class="ptab on t57">${updown}Gradient</div>
                <div class="burger">${burger}</div>
              </div>
              <div class="gbody">
                <div class="thumb-g"></div>
                <div class="gmini">${this.mini()}</div>
                <svg class="gicon" width="14" height="14" viewBox="0 0 14 14"><path d="M0 1h8v5H0zM5 8h9v5H5z" fill="#ddd" stroke="#ccc"/><path d="M10 3h4l-2 2zM0 11h4L2 9z" fill="#ccc"/></svg>
              </div>
              <svg class="garrow" width="6" height="4" viewBox="0 0 6 4"><path d="M0 0h6L3 3z" fill="#333"/></svg>
              <span class="typelbl">Type:</span>
              <div class="typesel">${chevron}</div>
              <div class="gform">
                <span class="gray">Stroke:</span>
                <div class="caps">
                  ${['M5 14V5h9M8 14V8h6', 'M4 14V5h12v9M8 14V8h8', 'M5 14V5h9v3H8v6'].map(d => html`<div><svg width="14" height="14" viewBox="2 2 14 14"><path d="${d}" fill="none" stroke="#d0d0d0" stroke-width="2"/></svg></div>`)}
                </div>
                <svg width="16" height="14" viewBox="0 0 16 14"><path d="M1 13h14M1 13L11 2M8 7q3 2 3 6" fill="none" stroke="#aaa"/></svg>
                <div class="sel">${chevron}</div>
                <svg width="18" height="16" viewBox="0 0 18 16"><ellipse cx="11" cy="7" rx="6" ry="4" fill="none" stroke="#aaa"/><path d="M2 1v12M1 2h2M1 12h2M2 15h14" stroke="#aaa"/></svg>
                <div class="sel">${chevron}</div>
              </div>
              <div class="gbar"></div>
              <svg class="gtrash" width="10" height="13" viewBox="0 0 10 13"><path d="M1 3h8v10H1zM0 2h10M3 0h4M3.500 5v6M6.500 5v6" fill="none" stroke="#ccc"/></svg>
              <div class="oform">
                <span class="gray">Opacity:</span><div class="sel">${chevron}</div>
                <span class="gray">Location:</span><div class="sel">${chevron}</div>
              </div>
            </div>

            <div class="panel appear">
              <div class="phead">
                <div class="ptab on t64">Appearance</div><div class="ptab t43">Layers</div>
                <div class="burger">${burger}</div>
              </div>
              <div class="alist">
                <div class="arow title">Mixed Objects</div>
                <div class="arow sub">Mixed Appearances</div>
                <div class="arow">
                  <svg class="eye" width="12" height="8" viewBox="0 0 12 8"><path d="M0 4q6-7 12 0-6 7-12 0z" fill="#ccc"/><circle cx="6" cy="4" r="2" fill="#999"/></svg>
                  <i class="eyeline"></i>
                  <span class="dot">Opacity:</span><span class="def">Default</span>
                </div>
              </div>
              <div class="afoot">
                <svg class="f1" width="11" height="11"><rect x=".5" y=".5" width="10" height="10" fill="#fafafa" stroke="#bbb"/></svg>
                <svg class="f2" width="11" height="11"><rect x=".5" y=".5" width="10" height="10" fill="#ddd" stroke="#bbb"/><rect x="3" y="3" width="5" height="5" fill="#bbb"/></svg>
                <span class="fx">fx.</span>
                <svg class="f4" width="11" height="11" viewBox="0 0 11 11"><circle cx="5.500" cy="5.500" r="4.500" fill="none" stroke="#333" stroke-width="1.500"/><path d="M2 2l7 7" stroke="#333" stroke-width="1.500"/></svg>
                <svg class="f5" width="10" height="11" viewBox="0 0 10 11"><path d="M0 0h10v11H3L0 8z" fill="#ccc"/></svg>
                <svg class="f6" width="10" height="12" viewBox="0 0 10 12"><path d="M1 3h8v9H1zM0 2h10M3 0h4M3.500 5v5M6.500 5v5" fill="none" stroke="#ccc"/></svg>
              </div>
            </div>
          </div>
        </div>
      </div>
    `;
  }
}
